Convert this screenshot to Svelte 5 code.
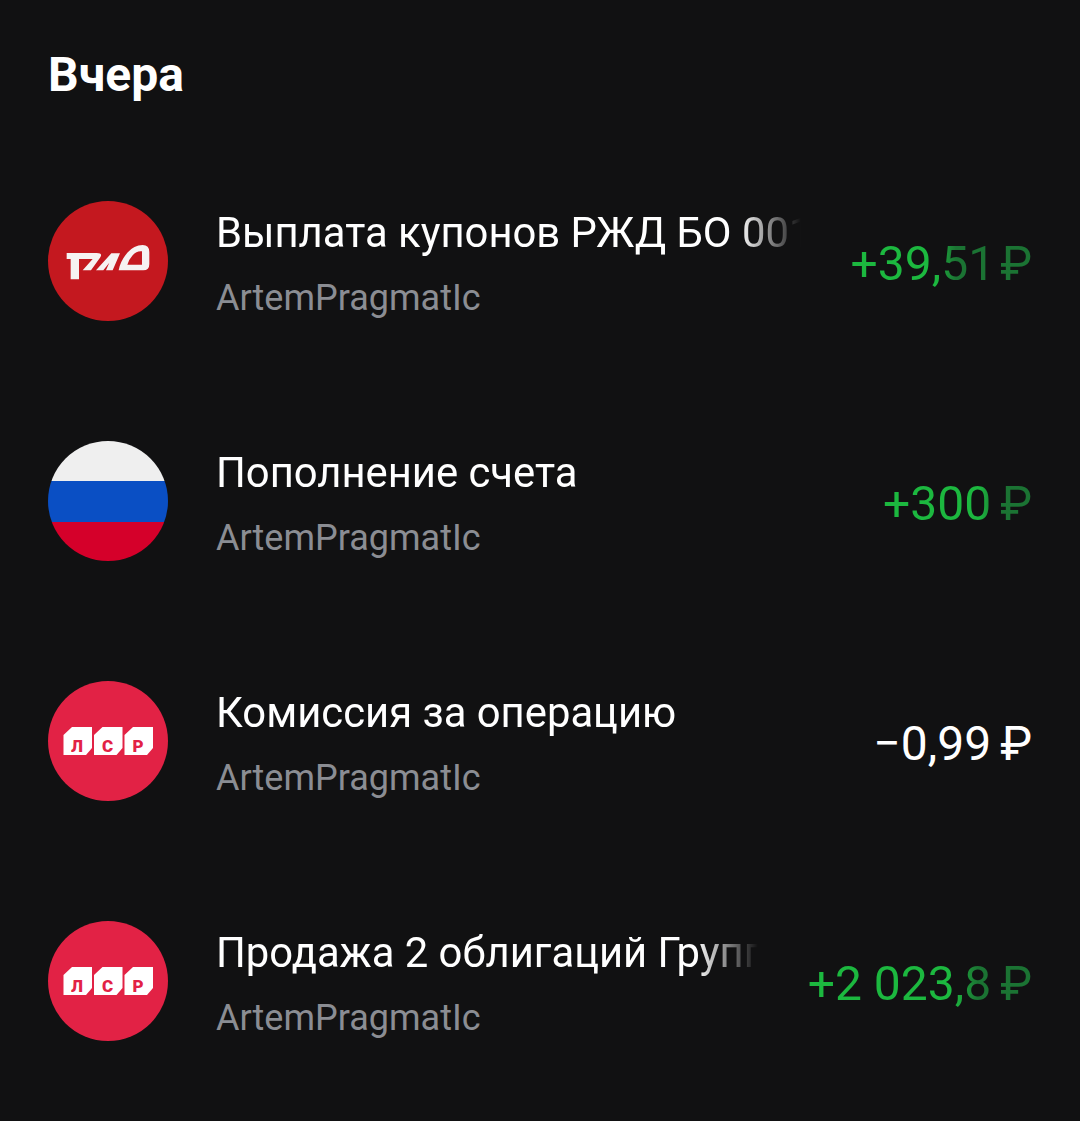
<script lang="ts">
	// список операций за день
	const rows = [
		{ logo: 'rzd', title: 'Выплата купонов РЖД БО 001Р-26R', amount: '+39,51', sign: '₽', gap: 5, tone: 'up', fade: 50 },
		{ logo: 'flag', title: 'Пополнение счета', amount: '+300', sign: '₽', gap: 9, tone: 'up', fade: 68 },
		{ logo: 'lsr', title: 'Комиссия за операцию', amount: '−0,99', sign: '₽', gap: 9, tone: 'plain', fade: 100 },
		{ logo: 'lsr', title: 'Продажа 2 облигаций Группа ЛСР', amount: '+2 023,8', sign: '₽', gap: 9, tone: 'up', fade: 68 }
	];
	// блоки логотипа ЛСР: смещение и буква
	const blocks = [
		{ dx: 0, letter: 'Л' },
		{ dx: 30.5, letter: 'С' },
		{ dx: 61, letter: 'Р' }
	];
</script>

<main class="screen">
	<h2>Вчера</h2>
	<ul>
		{#each rows as row}
			<li class="row">
				<svg class="avatar" viewBox="0 0 120 120" aria-hidden="true">
					{#if row.logo === 'rzd'}
						<circle cx="60" cy="60" r="60" fill="#c4181f" />
						<g transform="translate(-8 -11) scale(.3333)" fill="#f6f2f2" fill-rule="evenodd">
							<path d="M80 189H170Q190 189 180 203L153 241H128L158 207H117V268H92V207H80Z" />
							<path d="M168 241 214 190H240L218 241H198L208 218L190 241Z" />
							<path d="M236 241Q240 215 262 188Q282 165 308 165Q328 165 328 186V222Q328 241 310 241ZM262 224H306V184Q290 182 278 196Q266 210 262 224Z" />
						</g>
					{:else if row.logo === 'flag'}
						<defs>
							<clipPath id="disc"><circle cx="60" cy="60" r="60" /></clipPath>
						</defs>
						<g clip-path="url(#disc)">
							<rect width="120" height="40" fill="#efefef" />
							<rect y="40" width="120" height="41" fill="#0a4fc4" />
							<rect y="81" width="120" height="39" fill="#d5002a" />
						</g>
					{:else}
						<circle cx="60" cy="60" r="60" fill="#e22245" />
						{#each blocks as block}
							<g transform="translate({block.dx} 0)">
								<path fill="#fff" d="M15.5 54 24 46H44V67L38 74H15.5Z" />
								<text class="mark" x="29" y="70.5">{block.letter}</text>
							</g>
						{/each}
					{/if}
				</svg>
				<div class="info">
					<div class="title">{row.title}</div>
					<div class="sub">ArtemPragmatIc</div>
				</div>
				<div class="amount {row.tone}" style="--fade: {row.fade}%">
					{row.amount}<span class="sign" style="margin-left: {row.gap}px">{row.sign}</span>
				</div>
			</li>
		{/each}
	</ul>
</main>

<style>
	:global(body) {
		background-color: #111112;
	}
	.screen {
		height: 1121px;
		overflow: hidden;
		background-color: #111112;
		font-family: Roboto, 'Noto Sans', sans-serif;
		padding: 48px 48px 0;
		box-sizing: border-box;
	}
	h2 {
		margin: 0 0 93px;
		height: 60px;
		line-height: 54px;
		font-size: 48px;
		font-weight: 700;
		color: #fff;
	}
	ul {
		list-style: none;
		margin: 0;
		padding: 0;
		display: flex;
		flex-direction: column;
		gap: 120px;
	}
	.row {
		display: flex;
		align-items: center;
		height: 120px;
	}
	.avatar {
		flex: none;
		width: 120px;
		height: 120px;
	}
	.mark {
		font-size: 17px;
		font-weight: 900;
		fill: #e22245;
		text-anchor: middle;
	}
	.info {
		flex: 1;
		min-width: 0;
		margin: 10px 36px 0 48px;
	}
	.title {
		font-size: 41.8px;
		line-height: 64px;
		color: #fff;
		white-space: nowrap;
		overflow: hidden;
		mask-image: linear-gradient(to right, #000 calc(100% - 76px), transparent calc(100% - 14px));
	}
	.sub {
		font-size: 36px;
		line-height: 66px;
		color: #8b8d93;
		white-space: nowrap;
	}
	.amount {
		flex: none;
		font-size: 48px;
		line-height: 60px;
		padding-top: 6px;
		white-space: nowrap;
	}
	.plain {
		color: #fff;
	}
	.up {
		color: transparent;
		background-image: linear-gradient(to right, #1cb83f calc(var(--fade) - 3%), #1b7333 calc(var(--fade) + 8%));
		-webkit-background-clip: text;
		background-clip: text;
	}
</style>
